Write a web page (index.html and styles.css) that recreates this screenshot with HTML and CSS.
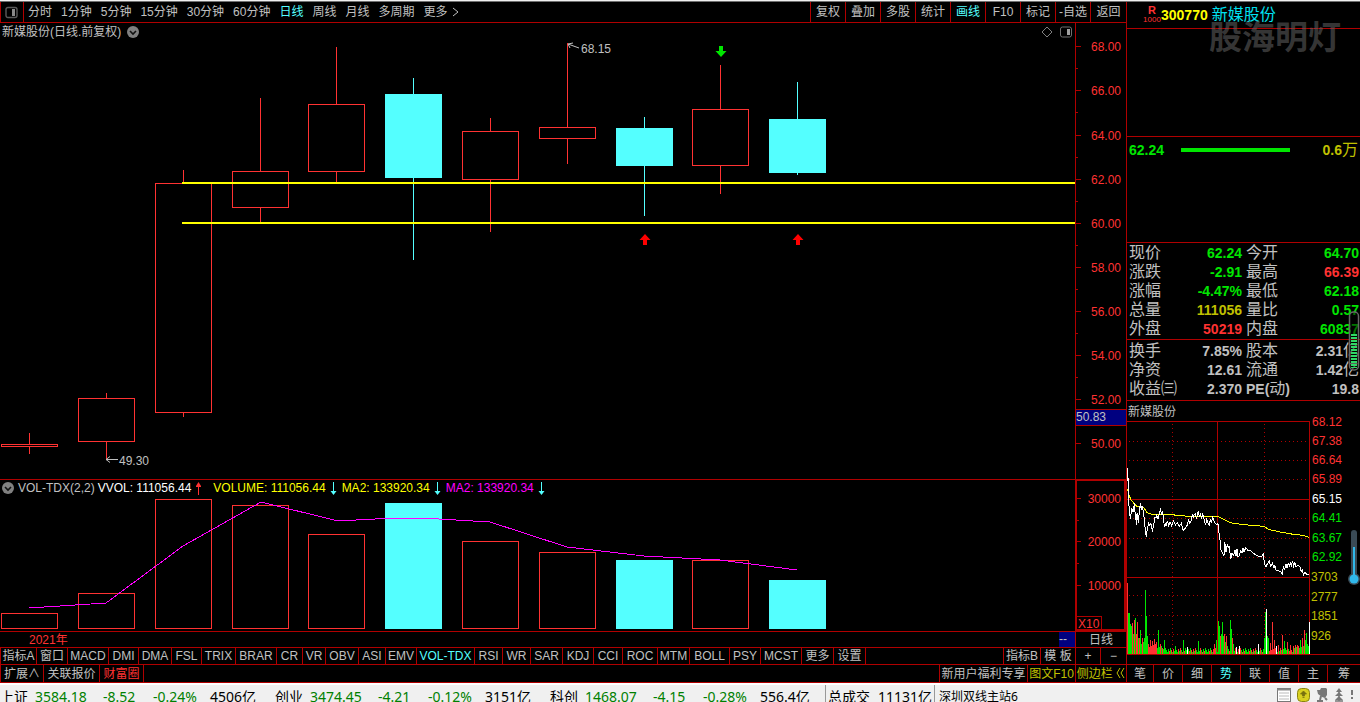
FILE: index.html
```html
<!DOCTYPE html>
<html lang="zh-CN">
<head>
<meta charset="utf-8">
<title>新媒股份 300770 日线</title>
<link rel="stylesheet" href="styles.css">
</head>
<body>
<div class="workspace">
  <main class="left">
    <nav class="toolbar">
      <button class="panel-toggle" aria-label="面板"><svg width="13" height="13" viewBox="0 0 13 13"><rect x="1" y="1.5" width="11" height="10" rx="2" fill="none" stroke="#5a5a5a" stroke-width="1.4"/><rect x="7" y="3" width="3" height="7" fill="#8a8a8a"/></svg></button>
      <div class="periods">
        <button>分时</button><button>1分钟</button><button>5分钟</button><button>15分钟</button><button>30分钟</button><button>60分钟</button><button class="active">日线</button><button>周线</button><button>月线</button><button>多周期</button><button>更多<svg class="more" width="7" height="10" viewBox="0 0 7 10"><path d="M1 1l5 4-5 4" fill="none" stroke="#c0c0c0"/></svg></button>
      </div>
      <div class="tools">
        <button>复权</button><button>叠加</button><button>多股</button><button>统计</button><button class="active">画线</button><button>F10</button><button>标记</button><button>-自选</button><button class="last">返回</button>
      </div>
    </nav>

    <section class="chart price">
      <header class="chart-head">
        <h1>新媒股份(日线.前复权)</h1>
        <svg class="drop" width="12" height="12" viewBox="0 0 12 12"><circle cx="6" cy="6" r="6" fill="#808080"/><path d="M3 5l3 3 3-3" fill="none" stroke="#101010" stroke-width="1.6"/></svg>
        <svg class="corner" width="31" height="12" viewBox="0 0 31 12"><path d="M6 1l5 5-5 5-5-5z" fill="none" stroke="#808080"/><rect x="19.500" y="1" width="11" height="10" rx="2" fill="none" stroke="#707070"/><rect x="26" y="3" width="3" height="6" fill="#a0a0a0"/></svg>
      </header>
      <svg class="plot" viewBox="0 23 1126 456" role="img" aria-label="日K线">
        <g class="up">
          <path d="M29.5 433v11M29.5 447v7M106.5 393v5M106.5 442v18M183.5 170v13M183.5 413v4M260.5 98v73M260.5 208v15M336.5 47v57M336.5 172v11M490.5 118v13M490.5 180v52M567.5 43v84M567.5 139v25M720.5 65v44M720.5 166v28"/>
          <rect x="1.500" y="444.500" width="56" height="2"/>
          <rect x="78.500" y="398.500" width="56" height="43"/>
          <rect x="155.500" y="183.500" width="56" height="229"/>
          <rect x="232.500" y="171.500" width="56" height="36"/>
          <rect x="308.500" y="104.500" width="56" height="67"/>
          <rect x="462.500" y="131.500" width="56" height="48"/>
          <rect x="539.500" y="127.500" width="56" height="11"/>
          <rect x="692.500" y="109.500" width="56" height="56"/>
        </g>
        <g class="down">
          <path d="M413.500 78v182M644.500 117v99M797.500 82v93"/>
          <rect x="385" y="94" width="57" height="84"/>
          <rect x="616" y="128" width="57" height="38"/>
          <rect x="769" y="119" width="57" height="54"/>
        </g>
        <path class="drawn" d="M182 183h893M182 223h893"/>
        <path fill="#00e600" d="M719 46h4v5h3.500l-5.500 6-5.500-6h3.500z"/>
        <path fill="#ff0000" d="M643 245h4v-5h3.500l-5.500-6-5.500 6h3.500zM796 245h4v-5h3.500l-5.500-6-5.500 6h3.500z"/>
        <g class="note">
          <path d="M118 459.500h-12l4-3M106 459.500l4 3M579 48l-11-4 5-1M568 44l2 4"/>
          <text x="119" y="465">49.30</text><text x="581" y="53">68.15</text>
        </g>
        <path class="rule" d="M1075.500 23v456M1076 46.500h5M1076 90.500h5M1076 135.500h5M1076 179.500h5M1076 223.500h5M1076 267.500h5M1076 311.500h5M1076 355.500h5M1076 399.500h5M1076 443.500h5M1076 68.500h2M1076 112.500h2M1076 157.500h2M1076 201.500h2M1076 245.500h2M1076 289.500h2M1076 333.500h2M1076 377.500h2"/>
        <g class="axis">
          <text x="1121" y="51">68.00</text><text x="1121" y="95">66.00</text><text x="1121" y="140">64.00</text><text x="1121" y="184">62.00</text><text x="1121" y="228">60.00</text><text x="1121" y="272">58.00</text><text x="1121" y="316">56.00</text><text x="1121" y="360">54.00</text><text x="1121" y="404">52.00</text><text x="1121" y="448">50.00</text>
        </g>
        <rect x="1076" y="409" width="50" height="16" fill="#000080"/>
        <path class="rule" d="M1076 409.500h50M1076 425.500h50"/>
        <text class="cursor-price" x="1076" y="421">50.83</text>
      </svg>
    </section>

    <section class="chart volume">
      <header class="chart-head">
        <svg width="12" height="12" viewBox="0 0 12 12"><circle cx="6" cy="6" r="6" fill="#808080"/><path d="M3 5l3 3 3-3" fill="none" stroke="#101010" stroke-width="1.600"/></svg>
        <span class="ind-name">VOL-TDX(2,2)</span>
        <span class="white">VVOL: 111056.44</span><svg class="arr first" width="7" height="13" viewBox="0 0 7 13"><path d="M3.500 1v12M1 4.500h5" stroke="#ff3232"/><path d="M3.500 0l2.500 4h-5z" fill="#ff3232"/></svg>
        <span class="yellow">VOLUME: 111056.44</span><svg class="arr" width="7" height="13" viewBox="0 0 7 13"><path d="M3.500 0v12" stroke="#54ffff"/><path d="M3.500 13l3-4h-6z" fill="#54ffff"/></svg>
        <span class="yellow">MA2: 133920.34</span><svg class="arr" width="7" height="13" viewBox="0 0 7 13"><path d="M3.500 0v12" stroke="#54ffff"/><path d="M3.500 13l3-4h-6z" fill="#54ffff"/></svg>
        <span class="magenta">MA2: 133920.34</span><svg class="arr" width="7" height="13" viewBox="0 0 7 13"><path d="M3.500 0v12" stroke="#54ffff"/><path d="M3.500 13l3-4h-6z" fill="#54ffff"/></svg>
      </header>
      <svg class="plot" viewBox="0 480 1126 151" role="img" aria-label="成交量">
        <g class="up">
          <rect x="1.500" y="613.500" width="56" height="15"/>
          <rect x="78.500" y="593.500" width="56" height="35"/>
          <rect x="155.500" y="499.500" width="56" height="129"/>
          <rect x="232.500" y="505.500" width="56" height="123"/>
          <rect x="308.500" y="534.500" width="56" height="94"/>
          <rect x="462.500" y="541.500" width="56" height="87"/>
          <rect x="539.500" y="552.500" width="56" height="76"/>
          <rect x="692.500" y="560.500" width="56" height="68"/>
        </g>
        <g class="down">
          <rect x="385" y="503" width="57" height="126"/>
          <rect x="616" y="560" width="57" height="69"/>
          <rect x="769" y="580" width="57" height="49"/>
        </g>
        <polyline class="ma" points="29,608 106,603 183,546 261,502 334,520 356,520 395,518 422,518 490,522 567,547 644,556 720,560 797,570"/>
        <rect class="frame" x="1076" y="480" width="49" height="150"/>
        <path class="rule" d="M1077 498.500h4M1077 541.500h4M1077 585.500h4M1077 520.500h2M1077 563.500h2M1077 616.500h24.500v13"/>
        <g class="axis"><text x="1121" y="503">30000</text><text x="1121" y="546">20000</text><text x="1121" y="590">10000</text></g>
        <text class="unit" x="1078" y="628">X10</text>
      </svg>
    </section>

    <div class="date-row">
      <span class="year">2021年</span><span class="dash">--</span><button class="side-cell">日线</button>
    </div>

    <nav class="tab-row">
      <div class="indicators">
        <button>指标A</button><button>窗口</button><button>MACD</button><button>DMI</button><button>DMA</button><button>FSL</button><button>TRIX</button><button>BRAR</button><button>CR</button><button>VR</button><button>OBV</button><button>ASI</button><button>EMV</button><button class="active">VOL-TDX</button><button>RSI</button><button>WR</button><button>SAR</button><button>KDJ</button><button>CCI</button><button>ROC</button><button>MTM</button><button>BOLL</button><button>PSY</button><button>MCST</button><button>更多</button><button>设置</button>
      </div>
      <div class="views">
        <button>指标B</button><button>模 板</button><button>+</button><button>−</button>
      </div>
    </nav>

    <nav class="tab-row extras">
      <div class="ext-left"><button>扩展∧</button><button>关联报价</button><button class="hot">财富圈</button></div>
      <div class="ext-right"><button>新用户福利专享</button><button class="gold">图文F10</button><button class="gold">侧边栏 <svg width="9" height="10" viewBox="0 0 9 10"><path d="M4 0L1 5l3 5M8 0L5 5l3 5" fill="none" stroke="#c0c000"/></svg></button></div>
    </nav>
  </main>

  <aside class="quote">
    <header class="stock">
      <span class="flag"><b>R</b><span>1000</span></span>
      <strong>300770</strong><span class="stock-name">新媒股份</span>
      <span class="watermark">股海明灯</span>
    </header>
    <div class="asks"></div>
    <div class="depth"><b>62.24</b><span class="depth-bar"></span><span class="lots"><b>0.6</b>万</span></div>
    <dl class="facts">
      <dt>现价</dt><dd class="g">62.24</dd><dt>今开</dt><dd class="g">64.70</dd>
      <dt>涨跌</dt><dd class="g">-2.91</dd><dt>最高</dt><dd class="r">66.39</dd>
      <dt>涨幅</dt><dd class="g">-4.47%</dd><dt>最低</dt><dd class="g">62.18</dd>
      <dt>总量</dt><dd class="y">111056</dd><dt>量比</dt><dd class="g">0.57</dd>
      <dt>外盘</dt><dd class="r">50219</dd><dt>内盘</dt><dd class="g">60837</dd>
    </dl>
    <dl class="facts basics">
      <dt>换手</dt><dd>7.85%</dd><dt>股本</dt><dd>2.31<i>亿</i></dd>
      <dt>净资</dt><dd>12.61</dd><dt>流通</dt><dd>1.42<i>亿</i></dd>
      <dt>收益㈢</dt><dd>2.370</dd><dt><b>PE(</b>动<b>)</b></dt><dd>19.8</dd>
    </dl>
    <section class="intraday">
      <svg class="plot" viewBox="1127 401 233 263" role="img" aria-label="分时走势">
        <text class="mini-name" x="1128" y="416">新媒股份</text>
        <path class="dots" d="M1129 441.500h180M1129 460.500h180M1129 479.500h180M1129 518.500h180M1129 538.500h180M1129 557.500h180M1129 595.500h180M1129 615.500h180M1129 634.500h180M1172.500 424v230M1264.500 424v230"/>
        <path class="rule" d="M1127 421.500h182.500v233M1217.500 421v233M1127 499.500h182M1127 577.500h182M1127 654.500h233"/>
        <g id="minute-volume"></g>
        <g class="minute" transform="translate(1120 400) scale(.3333)">
          <polyline stroke="#ffff00" points="23,268 27,285 33,300 42,310 52,320 72,323 80,337 95,343 145,343 190,348 292,349 310,358 330,368 370,374 432,379 445,388 480,396 520,403 548,406 567,412"/>
          <polyline stroke="#ffffff" points="23,204 23,240 25,238 25,295 28,330 31,358 35,325 38,335 40,318 42,335 44,310 46,360 48,340 50,375 52,340 55,370 58,335 61,310 64,330 66,318 70,335 73,360 76,390 79,410 82,385 86,370 89,376 92,370 95,378 97,395 101,375 105,350 108,355 110,343 114,358 118,342 122,325 124,345 127,338 130,350 133,380 136,368 138,378 142,362 146,378 150,365 155,378 160,362 166,375 172,368 178,378 184,370 190,392 196,385 202,375 206,360 209,370 212,368 217,345 220,355 222,345 226,342 229,355 232,348 235,332 238,352 241,340 245,358 248,340 253,362 257,375 260,358 264,368 268,375 271,360 275,366 278,352 284,368 290,374 294,370 297,400 300,420 303,450 308,460 312,468 314,425 318,455 322,435 325,442 328,440 332,478 336,460 340,466 343,460 345,450 348,468 351,448 354,470 358,468 362,452 366,458 369,445 372,455 378,443 384,452 392,452 400,460 410,466 420,470 426,468 430,462 433,490 438,500 443,490 448,483 452,498 457,490 462,505 465,497 468,510 475,512 482,515 487,522 490,500 494,508 498,492 501,505 505,488 508,500 511,488 514,498 518,482 521,498 525,488 528,500 534,497 540,500 544,515 548,510 550,525 555,518 562,524 567,523"/>
        </g>
        <path d="M1309.500 622v32" stroke="#fff"/>
        <g class="mini-axis">
          <g fill="#ff3232"><text x="1312" y="426">68.12</text><text x="1312" y="445">67.38</text><text x="1312" y="464">66.64</text><text x="1312" y="483">65.89</text></g>
          <text x="1312" y="503" fill="#fff">65.15</text>
          <g fill="#00e600"><text x="1312" y="522">64.41</text><text x="1312" y="542">63.67</text><text x="1312" y="561">62.92</text></g>
          <g fill="#c0c000"><text x="1311" y="581">3703</text><text x="1311" y="601">2777</text><text x="1311" y="620">1851</text><text x="1311" y="640">926</text></g>
        </g>
      </svg>
    </section>
    <nav class="side-tabs"><button>笔</button><button>价</button><button>细</button><button class="active">势</button><button>联</button><button>值</button><button>主</button><button>筹</button></nav>
    <svg class="gauge" width="12" height="60" viewBox="0 0 12 60"><rect x="1.500" y="1" width="9" height="58" rx="4" fill="#000" fill-opacity=".5" stroke="#666" stroke-width="1.500"/><path d="M6 23v34" stroke="#2fd866" stroke-width="6" stroke-dasharray="2 1"/></svg>
    <svg class="thermo" width="12" height="56" viewBox="0 0 12 56"><path d="M6 3v44" stroke="#3a4a55" stroke-width="6" stroke-linecap="round"/><circle cx="6" cy="49" r="6" fill="#3a4a55"/><path d="M6 17v30" stroke="#30b8ea" stroke-width="2"/><circle cx="6" cy="49" r="4.500" fill="#30b8ea"/></svg>
  </aside>
</div>

<footer class="status">
  <div class="index"><span>上证</span><span class="fall">3584.18</span><span class="fall">-8.52</span><span class="fall">-0.24%</span><span>4506亿</span></div>
  <div class="index"><span>创业</span><span class="fall">3474.45</span><span class="fall">-4.21</span><span class="fall">-0.12%</span><span>3151亿</span></div>
  <div class="index"><span>科创</span><span class="fall">1468.07</span><span class="fall">-4.15</span><span class="fall">-0.28%</span><span>556.4亿</span></div>
  <div class="total"><span>总成交</span><span>11131亿</span></div>
  <div class="station">深圳双线主站6</div>
  <div class="tray">
    <svg width="14" height="14" viewBox="0 0 14 14"><rect x=".5" y=".5" width="13" height="13" fill="#fff" stroke="#777"/><path d="M0 1.500h14" stroke="#888" stroke-width="2"/><path d="M2 5h10M2 8h10M2 11h10" stroke="#bbb"/></svg>
    <svg width="13" height="14" viewBox="0 0 13 14"><rect x=".5" y=".5" width="12" height="13" rx="4" fill="#d8d020" stroke="#8a8410"/><path d="M6.500 3L3.500 6h2v2h2V6h2zM5.500 9.500h2" fill="#777010" stroke="#777010" stroke-width=".8"/></svg>
    <svg width="12" height="14" viewBox="0 0 12 14"><path d="M1 2l3 0 1-2h5l1 1v6l-2 3-3-1-4-3z" fill="#777"/><path d="M5 8l-1 4M1 13h6M9 10l2 2" fill="none" stroke="#777" stroke-width="2"/></svg>
    <svg width="10" height="14" viewBox="0 0 10 14"><path d="M5 0l3 4H2zM5 4l4 4H1zM5 8l4 4H1z" fill="#777"/><path d="M5 3v10M1 13h8" stroke="#777" stroke-width="1.500"/></svg>
    <svg width="4" height="14" viewBox="0 0 4 14"><path d="M2 2v5M2 9v2" stroke="#777" stroke-width="2"/></svg>
  </div>
</footer>
<script src="minute.js"></script>
</body>
</html>
```
FILE: styles.css
```css
* { box-sizing: border-box; }
:root {
  --line: #b00000;
  --text: #c0c0c0;
  --red: #ff3232;
  --green: #00e600;
  --gold: #c0c000;
  --cyan: #54ffff;
}
body {
  margin: 0;
  min-height: 100vh;
  display: flex;
  flex-direction: column;
  background: #000;
  color: var(--text);
  border-top: 1px solid #f0f0f0;
  font: 12px/16px "Liberation Sans", "Noto Sans CJK SC", sans-serif;
  overflow-x: hidden;
}
button {
  appearance: none;
  margin: 0;
  padding: 0;
  border: 0;
  background: none;
  color: inherit;
  font: inherit;
  white-space: nowrap;
}
svg { display: block; flex: none; }
.active { color: var(--cyan); }
.workspace { display: flex; border-top: 1px solid #707070; flex: 1; }
.left { flex: 1; min-width: 0; display: flex; flex-direction: column; }

.toolbar { display: flex; height: 21px; border-bottom: 1px solid var(--line); border-left: 1px solid var(--line); }
.panel-toggle { width: 23px; padding-left: 4px; border-right: 1px solid var(--line); }
.periods { display: flex; gap: 9px; padding-left: 4px; flex: 1; }
.periods button { display: flex; align-items: center; gap: 4px; }
.tools { display: flex; }
.tools button { width: 35px; border-left: 1px solid var(--line); }
.tools .last { width: 36px; }

.chart { position: relative; border-bottom: 1px solid var(--line); }
.plot { width: 100%; height: auto; }
.chart-head { position: absolute; top: 0; left: 0; right: 0; display: flex; align-items: center; height: 18px; padding: 0 2px; }
.volume .chart-head { height: 16px; }
.chart-head h1 { margin: 0; font: inherit; }
.drop { margin-left: 6px; }
.corner { margin-left: auto; margin-right: 52px; }
.ind-name { margin: 0 3px 0 4px; }
.white { color: #fff; }
.yellow { color: #ffff00; }
.magenta { color: #ff00ff; }
.arr { margin: 0 5px 0 4px; }
.arr.first { margin-right: 11px; }

.up { fill: none; stroke: var(--red); shape-rendering: crispEdges; }
.down { shape-rendering: crispEdges; }
.down rect { fill: var(--cyan); }
.down path { stroke: var(--cyan); }
.drawn { stroke: #ffff00; stroke-width: 2; }
.note path { fill: none; stroke: #c0c0c0; }
.note text, .cursor-price { fill: #c0c0c0; }
.rule { fill: none; stroke: var(--line); shape-rendering: crispEdges; }
.frame { fill: none; stroke: var(--line); stroke-width: 2; }
.axis { fill: var(--red); text-anchor: end; }
.unit { fill: var(--red); }
.ma { fill: none; stroke: #ff00ff; shape-rendering: crispEdges; }

.date-row { display: flex; height: 16px; border-bottom: 1px solid var(--line); }
.year { flex: 1; padding-left: 29px; color: var(--red); }
.dash { width: 16px; background: #000080; line-height: 14px; }
.side-cell { width: 51px; border-left: 1px solid var(--line); }
.tab-row { display: flex; justify-content: space-between; height: 17px; border-bottom: 1px solid var(--line); border-left: 1px solid var(--line); }
.tab-row button { border-right: 1px solid var(--line); }
.indicators { display: grid; grid-template-columns: 36px 31px 41px 30px 33px 30px 34px 41px 26px 23px 33px 27px 31px 58px 28px 28px 32px 31px 29px 35px 32px 40px 31px 41px 32px 32px; }
.views { display: grid; grid-template-columns: 37px 35px 25px 25px; border-left: 1px solid var(--line); }
.views button:last-child, .ext-right button:last-child { border-right: 0; }
.extras { height: 18px; }
.ext-left { display: grid; grid-template-columns: 43px 56px 44px; }
.ext-right { display: grid; grid-template-columns: 88px 48px 50px; border-left: 1px solid var(--line); }
.ext-right svg { display: inline-block; }
.hot { color: var(--red); }
.gold { color: var(--gold); }

.quote { position: relative; flex: none; width: 234px; border-left: 1px solid var(--line); display: flex; flex-direction: column; }
.stock { position: relative; display: flex; align-items: center; height: 27px; padding-left: 17px; border-bottom: 1px solid var(--line); font-size: 16px; color: #00e0f0; }
.flag { display: flex; flex-direction: column; align-items: center; width: 16px; font-size: 11px; line-height: 9px; color: var(--red); }
.flag span { font-family: "Liberation Sans Narrow", "Liberation Sans", sans-serif; font-size: 8px; }
.stock strong { font-size: 14px; color: #ffff00; margin-left: 1px; margin-right: 4px; }
.watermark { position: absolute; left: 82px; top: 14px; font-size: 33px; line-height: 44px; font-weight: 700; color: rgba(100, 100, 100, .55); }
.asks { height: 108px; border-bottom: 1px solid var(--line); }
.depth { display: flex; align-items: flex-start; height: 106px; padding: 3px 2px 0; border-bottom: 1px solid var(--line); font-size: 14px; line-height: 20px; }
.depth > b { width: 52px; color: var(--green); }
.depth-bar { width: 109px; height: 4px; margin-top: 8px; background: var(--green); }
.lots { margin-left: auto; color: var(--gold); font-size: 16px; }
.lots b { font-size: 14px; }
.facts { margin: 0; display: grid; grid-template-columns: 52px 61px 52px 65px; column-gap: 0; padding: 0 0 1px 2px; grid-auto-rows: 19px; font-size: 16px; line-height: 20px; border-bottom: 1px solid var(--line); justify-content: start; }
.facts dt { white-space: nowrap; }
.facts dt:nth-of-type(even) { padding-left: 4px; }
.facts dd { margin: 0; font-size: 14px; font-weight: 700; text-align: right; white-space: nowrap; }
.facts dt b { font-size: 14px; }
.facts i { font-style: normal; font-weight: 400; font-size: 16px; }
.facts.basics { padding-top: 1px; padding-bottom: 2px; }
.g { color: var(--green); }
.r { color: var(--red); }
.y { color: var(--gold); }
.intraday { border-bottom: 1px solid var(--line); margin-bottom: auto; }
.mini-name { fill: #c0c0c0; }
.dots { stroke: var(--line); stroke-dasharray: 1 3; shape-rendering: crispEdges; }
.minute polyline { fill: none; vector-effect: non-scaling-stroke; shape-rendering: crispEdges; }
.mini-axis { font-size: 12px; }
.side-tabs { display: grid; grid-template-columns: 27px repeat(6, 29px) 1fr; height: 18px; border-bottom: 1px solid var(--line); }
.side-tabs button { border-right: 1px solid var(--line); }
.side-tabs button:last-child { border-right: 0; }
.gauge { position: absolute; right: 0; top: 309px; }
.thermo { position: absolute; right: 0; top: 528px; }

.status { display: flex; height: 19px; overflow: hidden; border-top: 2px solid #fff; background: #f0f0f0; color: #000; font: 14px/24px "Noto Sans", "Noto Sans CJK SC", sans-serif; white-space: nowrap; }
.index { display: grid; grid-template-columns: 35px 68px 50px 57px 65px; }
.fall { color: #008000; }
.total { display: flex; gap: 8px; width: 109px; padding-left: 2px; border-left: 1px solid #999; }
.station { padding-left: 4px; border-left: 1px solid #999; font-size: 12px; }
.tray { display: flex; gap: 6px; margin-left: auto; padding: 3px 6px 0 0; }
```
FILE: minute.js
```js
// Minute volume: bar heights with the peaks listed and a low baseline between them.
(function () {
  var peaks = {
    0: 'r71', 1: 'g41', 2: 'g41', 3: 'g30', 4: 'g28', 5: 'r31', 6: 'g20', 7: 'r34', 8: 'g36', 9: 'r20', 10: 'r32',
    11: 'g16', 12: 'r16', 13: 'g24', 14: 'g10', 15: 'r16', 16: 'g12', 17: 'g16', 18: 'g64', 19: 'g38', 20: 'g18',
    21: 'r10', 23: 'r14', 25: 'r13', 27: 'r15', 29: 'r12', 31: 'g24', 37: 'g14', 48: 'g8', 56: 'g14', 60: 'w7',
    71: 'g13', 87: 'r10', 89: 'g14', 91: 'g33', 92: 'g28', 93: 'r18', 94: 'g20', 95: 'g32', 96: 'g18', 97: 'r20',
    98: 'g12', 99: 'r18', 100: 'g8', 103: 'g34', 104: 'g25', 105: 'r16', 106: 'g10', 109: 'w7', 112: 'w8',
    118: 'g6', 131: 'w10', 137: 'g16', 138: 'g42', 139: 'w45', 140: 'g18', 141: 'g16', 143: 'r11', 145: 'r32',
    147: 'r14', 149: 'w8', 151: 'r9', 155: 'r19', 157: 'g13', 160: 'r12', 163: 'r9', 170: 'r9', 173: 'g14',
    175: 'r16', 177: 'r24', 178: 'g14', 179: 'g21', 180: 'g10'
  };
  var colors = { r: '#ff3232', g: '#00e600', w: '#ffffff' };
  var group = document.getElementById('minute-volume');
  for (var i = 0; i < 182; i++) {
    var spec = peaks[i];
    if (!spec) {
      var base = i < 36 ? 7 : i > 165 ? 6 : 3;
      spec = ((i * 7 + (i >> 2)) % 5 < 3 ? 'g' : 'r') + (base + (i * 13) % 5 - 1);
    }
    var h = +spec.slice(1);
    var bar = document.createElementNS('http://www.w3.org/2000/svg', 'rect');
    bar.setAttribute('x', 1127 + i);
    bar.setAttribute('y', 654 - h);
    bar.setAttribute('width', 1);
    bar.setAttribute('height', h);
    bar.setAttribute('fill', colors[spec[0]]);
    group.appendChild(bar);
  }
})();
```
